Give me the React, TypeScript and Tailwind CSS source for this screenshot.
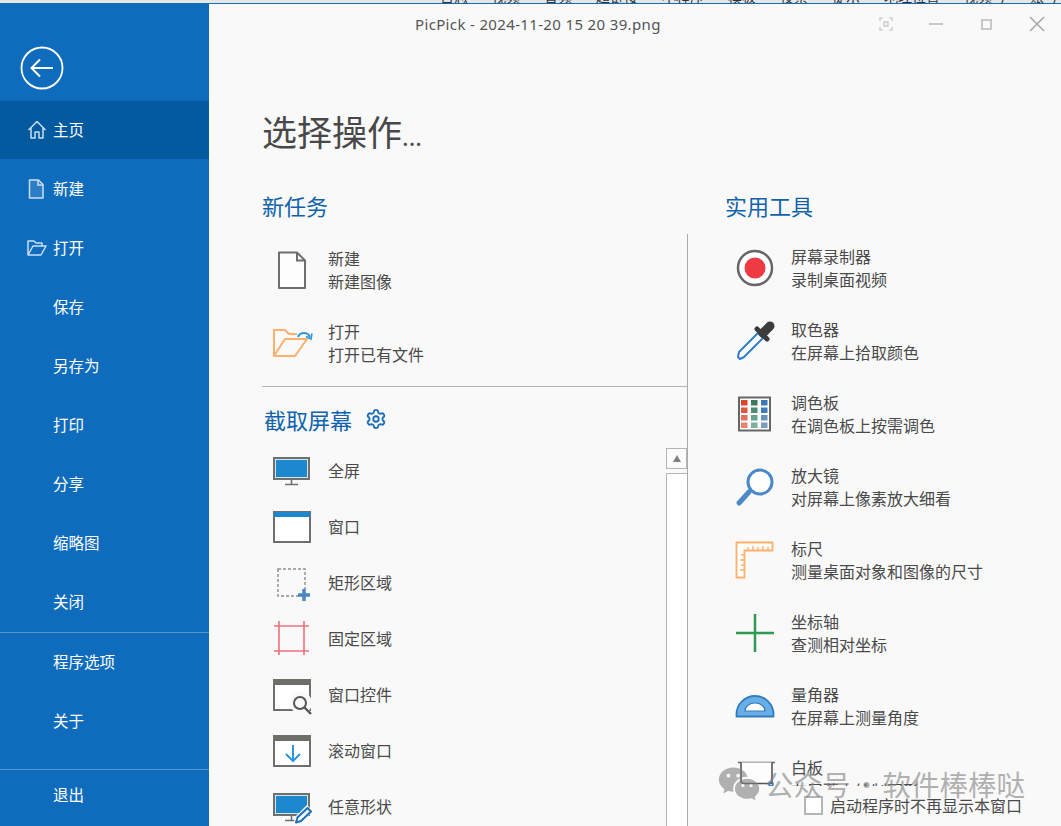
import React from 'react';
import { Settings } from 'lucide-react';
import { RiWechatFill } from 'react-icons/ri';

const Svg: React.FC<{ children: React.ReactNode }> = ({ children }) => (
    <svg width="48" height="48" viewBox="0 0 48 48" fill="none" className="shrink-0">
        {children}
    </svg>
);

const Monitor = () => (
    <>
        <rect x="4" y="11" width="35" height="21" fill="#1e88cf" stroke="#6f6f6f" strokeWidth="2" />
        <rect x="5.5" y="12.5" width="32" height="18" fill="#1e88cf" stroke="#cfe6f5" strokeWidth="1" />
        <path d="M21.5 33v4M15 37.5h13" stroke="#6f6f6f" strokeWidth="1.6" />
    </>
);

const WindowFrame: React.FC<{ bar: string }> = ({ bar }) => (
    <>
        <rect x="4" y="9" width="36" height="30" fill="#ffffff" stroke="#6f6f6f" strokeWidth="2" />
        <rect x="4" y="9" width="36" height="5" fill={bar} />
    </>
);

const iconNew = (
    <Svg>
        <path d="M9 6.500h18l8 8V42H9z" fill="#fdfdfd" stroke="#6e6e6e" strokeWidth="2" strokeLinejoin="round" />
        <path d="M27 6.500v8h8" stroke="#6e6e6e" strokeWidth="2" />
    </Svg>
);

const iconOpen = (
    <Svg>
        <path d="M4 37V11h11l4 4h8M4 37h21l12-17H15L4 37z" stroke="#ffb06a" strokeWidth="2" strokeLinejoin="round" />
        <path d="M28 18a6.500 6.500 0 0 1 12 0" stroke="#2f96dc" strokeWidth="2" />
        <path d="M36 17.500l5 2.500 1-5.500" stroke="#2f96dc" strokeWidth="1.600" />
    </Svg>
);

const iconFull = (
    <Svg>
        <Monitor />
    </Svg>
);

const iconWindow = (
    <Svg>
        <WindowFrame bar="#1e88cf" />
    </Svg>
);

const iconRect = (
    <Svg>
        <rect x="8" y="10" width="27" height="27" stroke="#8d8d8d" strokeWidth="1.400" strokeDasharray="3 2" />
        <path d="M34 30v12M28 36h12" stroke="#4a86c5" strokeWidth="3.500" />
    </Svg>
);

const iconFixed = (
    <Svg>
        <path d="M9 6v34M34 6v34M4 11h35M4 36h35" stroke="#f0717a" strokeWidth="1.600" />
    </Svg>
);

const iconControl = (
    <Svg>
        <WindowFrame bar="#6e6e68" />
        <circle cx="31" cy="32" r="11" fill="#f9f9f9" />
        <circle cx="30" cy="32" r="6" fill="#f9f9f9" stroke="#555555" strokeWidth="2" />
        <path d="M34.500 36.500L41 43" stroke="#555555" strokeWidth="2.400" />
    </Svg>
);

const iconScroll = (
    <Svg>
        <WindowFrame bar="#6e6e68" />
        <path d="M23 18v16M16 27l7 7 7-7" stroke="#2f96dc" strokeWidth="2" />
    </Svg>
);

const iconFree = (
    <Svg>
        <Monitor />
        <path d="M25 40l2-6 10-10 4 4-10 10z" fill="#f9f9f9" stroke="#f9f9f9" strokeWidth="3" />
        <path d="M26 39.500l1.500-5 10-9.500 3.500 3.500-10 9.500z" fill="#ffffff" stroke="#1b6fb8" strokeWidth="2" strokeLinejoin="round" />
    </Svg>
);

const iconRecord = (
    <Svg>
        <circle cx="22" cy="24" r="17" fill="#ffffff" stroke="#666666" strokeWidth="2.500" />
        <circle cx="22" cy="24" r="10.500" fill="#ee3a43" />
    </Svg>
);

const iconDropper = (
    <Svg>
        <path d="M6 35L25 16l5 5L11 40l-4 2-2-2z" fill="#ffffff" stroke="#2f7ec7" strokeWidth="2" strokeLinejoin="round" />
        <path d="M24 12l10 10" stroke="#3c3c3c" strokeWidth="5" strokeLinecap="round" />
        <path d="M30 16l7-7" stroke="#3c3c3c" strokeWidth="9" strokeLinecap="round" />
    </Svg>
);

const paletteCells = [
    { x: 8, y: 10, c: '#d9472b' }, { x: 18, y: 10, c: '#3e7a60' }, { x: 28, y: 10, c: '#3b78b8' },
    { x: 8, y: 17.5, c: '#e0563f' }, { x: 18, y: 17.5, c: '#4f8a72' }, { x: 28, y: 17.5, c: '#3f7ab9' },
    { x: 8, y: 25, c: '#e56f5d' }, { x: 18, y: 25, c: '#65a48c' }, { x: 28, y: 25, c: '#6a93bd' },
    { x: 8, y: 32.5, c: '#e8836f' }, { x: 18, y: 32.5, c: '#7db09e' }, { x: 28, y: 32.5, c: '#7a9cc0' },
];

const iconPalette = (
    <Svg>
        <rect x="6" y="7.500" width="31" height="33" fill="#ffffff" stroke="#666666" strokeWidth="2" />
        {paletteCells.map((cell) => (
            <rect key={`${cell.x}-${cell.y}`} x={cell.x} y={cell.y} width="6.500" height="5.500" fill={cell.c} />
        ))}
    </Svg>
);

const iconLens = (
    <Svg>
        <circle cx="27" cy="19" r="12" fill="#ffffff" stroke="#4a88c7" strokeWidth="3" />
        <path d="M16 29L6 40" stroke="#4a88c7" strokeWidth="5" strokeLinecap="round" />
    </Svg>
);

const iconRuler = (
    <Svg>
        <path d="M3.500 6.500h36v8h-28v27h-8z" fill="#ffffff" stroke="#ffb06a" strokeWidth="1.800" />
        <path d="M15 14v-3M20 14v-4M25 14v-3M30 14v-4M35 14v-3M11 19H8M11 24H7M11 29H8M11 34H7" stroke="#ffb06a" strokeWidth="1.400" />
    </Svg>
);

const iconAxis = (
    <Svg>
        <path d="M22 5v38M3 24h38" stroke="#2e9a52" strokeWidth="2.500" />
    </Svg>
);

const iconAngle = (
    <Svg>
        <path d="M3.500 34.500v-2a18.500 18.500 0 0 1 37 0v2z" fill="#6aaee8" stroke="#2f7cc0" strokeWidth="1.800" strokeLinejoin="round" />
        <path d="M12 29a10 8 0 0 1 20 0z" fill="#ffffff" stroke="#2f7cc0" strokeWidth="1.200" />
    </Svg>
);

const iconBoard = (
    <Svg>
        <path d="M5 7.500h37" stroke="#666666" strokeWidth="1.600" />
        <path d="M8 7.500v18a3 3 0 0 0 3 3h28V7.500" fill="#fdfdfd" stroke="#555555" strokeWidth="1.600" />
        <circle cx="38" cy="29" r="2" stroke="#2f7ec7" strokeWidth="1.600" />
    </Svg>
);

const HomeIcon = () => (
    <svg width="20" height="20" viewBox="0 0 20 20" fill="none" stroke="#c7def2" strokeWidth="1.500">
        <path d="M1.500 10L10 1.500 18.500 10M4 8v10h4v-6h4v6h4V8" strokeLinejoin="round" />
    </svg>
);

const DocIcon = () => (
    <svg width="20" height="20" viewBox="0 0 20 20" fill="none" stroke="#c7def2" strokeWidth="1.500">
        <path d="M2.500 1h9l4.500 4.500V19H2.500z" fill="#ffffff" fillOpacity="0.12" strokeLinejoin="round" />
        <path d="M11 1v5h5" />
    </svg>
);

const FolderIcon = () => (
    <svg width="20" height="20" viewBox="0 0 20 20" fill="none" stroke="#c7def2" strokeWidth="1.500">
        <path d="M1 17V3h6l2 2h6v3M1 17h13l5-9H6z" strokeLinejoin="round" />
    </svg>
);

const BackButton = () => (
    <svg width="44" height="44" viewBox="0 0 44 44" fill="none" stroke="#ffffff">
        <circle cx="22" cy="22" r="20.500" strokeWidth="1.800" />
        <path d="M33 22H12M20 13.500L11.500 22l8.500 8.500" strokeWidth="2" />
    </svg>
);

const navTop = [
    { label: '主页', icon: <HomeIcon />, active: true },
    { label: '新建', icon: <DocIcon /> },
    { label: '打开', icon: <FolderIcon /> },
    { label: '保存' },
    { label: '另存为' },
    { label: '打印' },
    { label: '分享' },
    { label: '缩略图' },
    { label: '关闭' },
];

const NavRow: React.FC<{ label: string; icon?: React.ReactNode; active?: boolean }> = ({ label, icon, active }) => (
    <div className={`flex items-center text-[15.500px] text-white ${active ? 'mb-px h-[58px] pb-px bg-[#045a9f]' : 'h-[59px] pb-[2px]'}`}>
        <span className="flex w-[53px] shrink-0 pl-[27px]">{icon}</span>
        <span>{label}</span>
    </div>
);

const Sidebar = () => (
    <aside className="flex w-[209px] shrink-0 flex-col bg-[#0f6cbd]">
        <div className="h-[97px] pl-[20px] pt-[42px]">
            <BackButton />
        </div>
        {navTop.map((item) => (
            <NavRow key={item.label} label={item.label} icon={item.icon} active={item.active} />
        ))}
        <div className="h-px bg-[#4f93d0]" />
        <NavRow label="程序选项" />
        <NavRow label="关于" />
        <div className="h-[18px]" />
        <div className="h-px bg-[#4f93d0]" />
        <div className="flex h-[51px] items-center pb-[2px] pl-[53px] text-[15.500px] text-white">退出</div>
    </aside>
);

const TitleBar = () => (
    <div className="flex h-[40px] items-center justify-between pl-[206px]">
        <span className="font-['Noto_Sans'] text-[15px] tracking-[0.35px] text-[#555555]">PicPick - 2024-11-20 15 20 39.png</span>
        <div className="-mr-[2px] flex items-center">
            <span className="flex w-[50px] justify-center">
                <svg width="14" height="14" viewBox="0 0 14 14" fill="none" stroke="#c4c4c4" strokeWidth="1.200">
                    <path d="M1 4V1h3M10 1h3v3M13 10v3h-3M4 13H1v-3" />
                    <rect x="5" y="5" width="4" height="4" />
                </svg>
            </span>
            <span className="flex w-[50px] justify-center">
                <span className="h-[2px] w-[14px] bg-[#c8c8c8]" />
            </span>
            <span className="flex w-[50px] justify-center">
                <span className="h-[11px] w-[11px] border-2 border-[#c8c8c8]" />
            </span>
            <span className="flex w-[52px] justify-center">
                <svg width="16" height="16" viewBox="0 0 16 16" fill="none" stroke="#a8a8a8" strokeWidth="1.600">
                    <path d="M1 1l14 14M15 1L1 15" />
                </svg>
            </span>
        </div>
    </div>
);

const TaskRow: React.FC<{ icon: React.ReactNode; title: string; desc: string }> = ({ icon, title, desc }) => (
    <div className="flex h-[73px] items-center">
        <div className="w-[66px] pl-[8px]">{icon}</div>
        <div className="text-[16px] leading-[23px] text-[#4a4a4a]">
            <div>{title}</div>
            <div>{desc}</div>
        </div>
    </div>
);

const captureItems = [
    { label: '全屏', icon: iconFull },
    { label: '窗口', icon: iconWindow },
    { label: '矩形区域', icon: iconRect },
    { label: '固定区域', icon: iconFixed },
    { label: '窗口控件', icon: iconControl },
    { label: '滚动窗口', icon: iconScroll },
    { label: '任意形状', icon: iconFree },
];

const tools = [
    { title: '屏幕录制器', desc: '录制桌面视频', icon: iconRecord },
    { title: '取色器', desc: '在屏幕上拾取颜色', icon: iconDropper },
    { title: '调色板', desc: '在调色板上按需调色', icon: iconPalette },
    { title: '放大镜', desc: '对屏幕上像素放大细看', icon: iconLens },
    { title: '标尺', desc: '测量桌面对象和图像的尺寸', icon: iconRuler },
    { title: '坐标轴', desc: '查测相对坐标', icon: iconAxis },
    { title: '量角器', desc: '在屏幕上测量角度', icon: iconAngle },
    { title: '白板', desc: '在屏幕上绘制图形', icon: iconBoard },
];

const LeftColumn = () => (
    <div className="h-[592px] w-[426px] shrink-0 overflow-hidden border-r border-[#ababab]">
        <div className="-mt-px">
            <TaskRow icon={iconNew} title="新建" desc="新建图像" />
            <TaskRow icon={iconOpen} title="打开" desc="打开已有文件" />
        </div>
        <div className="mt-[7px] h-px bg-[#b4b4b4]" />
        <div className="flex h-[56px] items-center gap-[13px] pl-[2px] pt-[8px]">
            <h2 className="text-[22px] text-[#0f63ab]">截取屏幕</h2>
            <Settings size={22} color="#1a6db5" strokeWidth={2} />
        </div>
        <div className="flex">
            <div className="w-[404px] shrink-0">
                {captureItems.map((item) => (
                    <div key={item.label} className="flex h-[56px] items-center">
                        <div className="w-[66px] pl-[8px]">{item.icon}</div>
                        <span className="mb-[2px] text-[16px] text-[#4a4a4a]">{item.label}</span>
                    </div>
                ))}
            </div>
            <div className="flex w-[21px] flex-col pt-[5px]">
                <div className="flex h-[21px] items-center justify-center border border-[#b4b4b4] bg-[#fbfbfb]">
                    <span className="h-0 w-0 border-x-[4px] border-b-[7px] border-x-transparent border-b-[#808080]" />
                </div>
                <div className="mt-[4px] flex-1 border-l border-t border-[#b4b4b4] bg-white" />
            </div>
        </div>
    </div>
);

const RightColumn = () => (
    <div className="-mt-[3px] flex-1 pl-[37px]">
        <div className="h-[555px] overflow-hidden">
            {tools.map((tool) => (
                <TaskRow key={tool.title} icon={tool.icon} title={tool.title} desc={tool.desc} />
            ))}
        </div>
        <div className="ml-[79px] mt-[7px] flex items-center gap-[7px]">
            <span className="h-[19px] w-[19px] border-2 border-[#b6b6b6] bg-white" />
            <span className="text-[16px] text-[#4a4a4a]">启动程序时不再显示本窗口</span>
        </div>
    </div>
);

const Watermark = () => (
    <div className="pointer-events-none absolute left-[717px] top-[762px] flex items-center text-[#808080] opacity-60">
        <RiWechatFill size={44} />
        <span className="ml-[4px] text-[28.500px] leading-[44px]">公众号</span>
        <span className="w-[32px] text-center text-[28px] leading-[44px]">·</span>
        <span className="text-[28.500px] leading-[44px]">软件棒棒哒</span>
    </div>
);

const App: React.FC = () => {
    return (
        <div className="relative flex h-[826px] w-[1061px] flex-col overflow-hidden bg-[#f9f9f9] font-['Noto_Sans_CJK_SC','Noto_Sans',sans-serif]">
            <div className="flex h-[3px] items-end gap-[24px] overflow-hidden whitespace-nowrap bg-[#e6e6e6] pl-[440px] text-[14px] leading-[14px] text-[#333333]">
                <span>日志</span>
                <span>视频</span>
                <span>音频</span>
                <span>超链接</span>
                <span>小程序</span>
                <span>模板</span>
                <span>投票</span>
                <span>提示</span>
                <span>地理位置</span>
                <span>视频号</span>
                <span>账号名片</span>
            </div>
            <div className="h-px bg-[#0f6cbd]" />
            <div className="flex flex-1">
                <Sidebar />
                <main className="flex-1">
                    <TitleBar />
                    <div className="pl-[53px]">
                        <h1 className="mt-[42px] flex h-[88px] items-baseline pt-[19px] text-[35px] text-[#484848]">
                            选择操作<span className="text-[24px]">...</span>
                        </h1>
                        <div className="flex h-[60px] items-center pt-[3px] text-[22px] text-[#0f63ab]">
                            <h2 className="w-[463px]">新任务</h2>
                            <h2>实用工具</h2>
                        </div>
                        <div className="flex">
                            <LeftColumn />
                            <RightColumn />
                        </div>
                    </div>
                </main>
            </div>
            <Watermark />
        </div>
    );
};

export default App;
